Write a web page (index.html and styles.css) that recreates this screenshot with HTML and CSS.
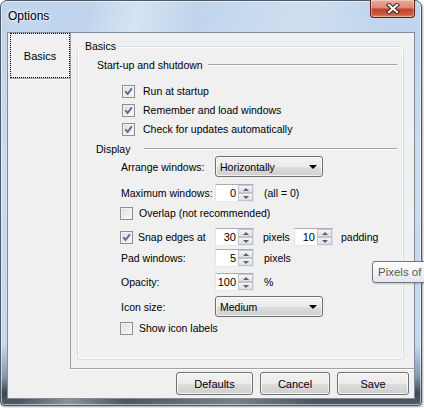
FILE: index.html
```html
<!DOCTYPE html>
<html>
<head>
<meta charset="utf-8">
<link rel="stylesheet" href="styles.css">
</head>
<body>
<div class="window">
  <div class="titlebar">
    <span class="title">Options</span>
    <div class="close">
      <svg width="14" height="11" viewBox="0 0 14 11">
        <path d="M3 2 L11 9 M11 2 L3 9" stroke="#3a2a28" stroke-width="4.2" stroke-linecap="square" fill="none"/>
        <path d="M3 2 L11 9 M11 2 L3 9" stroke="#ffffff" stroke-width="2.2" stroke-linecap="square" fill="none"/>
      </svg>
    </div>
  </div>
  <div class="client">
    <div class="main">
      <div class="tabs">
        <div class="tab">Basics</div>
        <div class="tab-line"></div>
      </div>
      <div class="panel">
        <div class="group">
          <span class="legend">Basics</span>

          <div class="header h1"><span>Start-up and shutdown</span><span class="rule"></span></div>

          <div class="row check startup first"><span class="cb"><svg width="11" height="11" viewBox="0 0 11 11"><path d="M2.3 5.2 L4.6 8 L8.8 2.4" stroke="#56699a" stroke-width="1.9" fill="none"/></svg></span><span>Run at startup</span></div>
          <div class="row check startup"><span class="cb"><svg width="11" height="11" viewBox="0 0 11 11"><path d="M2.3 5.2 L4.6 8 L8.8 2.4" stroke="#56699a" stroke-width="1.9" fill="none"/></svg></span><span>Remember and load windows</span></div>
          <div class="row check startup"><span class="cb"><svg width="11" height="11" viewBox="0 0 11 11"><path d="M2.3 5.2 L4.6 8 L8.8 2.4" stroke="#56699a" stroke-width="1.9" fill="none"/></svg></span><span>Check for updates automatically</span></div>

          <div class="header h2"><span>Display</span><span class="rule"></span></div>

          <div class="row field r-arrange">
            <span class="label">Arrange windows:</span>
            <div class="combo"><span>Horizontally</span><span class="arrow"></span></div>
          </div>

          <div class="row field r-max">
            <span class="label">Maximum windows:</span>
            <div class="spin"><span class="val">0</span><span class="btns"><span class="up"></span><span class="down"></span></span></div>
            <span class="unit">(all = 0)</span>
          </div>

          <div class="row check disp r-overlap"><span class="cb"></span><span>Overlap (not recommended)</span></div>

          <div class="row check r-snap">
            <span class="snap-label"><span class="cb"><svg width="11" height="11" viewBox="0 0 11 11"><path d="M2.3 5.2 L4.6 8 L8.8 2.4" stroke="#56699a" stroke-width="1.9" fill="none"/></svg></span><span>Snap edges at</span></span>
            <div class="spin"><span class="val">30</span><span class="btns"><span class="up"></span><span class="down"></span></span></div>
            <span class="unit wide">pixels</span>
            <div class="spin"><span class="val">10</span><span class="btns"><span class="up"></span><span class="down"></span></span></div>
            <span class="unit pad">padding</span>
          </div>

          <div class="row field r-pad">
            <span class="label">Pad windows:</span>
            <div class="spin"><span class="val">5</span><span class="btns"><span class="up"></span><span class="down"></span></span></div>
            <span class="unit">pixels</span>
          </div>

          <div class="row field r-opacity">
            <span class="label">Opacity:</span>
            <div class="spin"><span class="val">100</span><span class="btns"><span class="up"></span><span class="down"></span></span></div>
            <span class="unit">%</span>
          </div>

          <div class="row field r-icon">
            <span class="label">Icon size:</span>
            <div class="combo"><span>Medium</span><span class="arrow"></span></div>
          </div>

          <div class="row check disp r-show"><span class="cb"></span><span>Show icon labels</span></div>
        </div>
      </div>
    </div>
    <div class="footer">
      <div class="btn b-defaults">Defaults</div>
      <div class="btn b-cancel">Cancel</div>
      <div class="btn b-save">Save</div>
    </div>
  </div>
</div>
<div class="tooltip"><span>Pixels of</span></div>
</body>
</html>
```

FILE: styles.css
```css
html, body {
  margin: 0;
  padding: 0;
  overflow: hidden;
  background: #ffffff;
  width: 424px;
  height: 408px;
}
body {
  font-family: "Liberation Sans", Arial, sans-serif;
  font-size: 10.5px;
  color: #000;
  position: relative;
}
.window {
  box-sizing: border-box;
  width: 422px;
  height: 406px;
  border: 1px solid #4a5a6b;
  border-radius: 7px 7px 4px 4px;
  padding: 0 6px 6px 6px;
  display: flex;
  flex-direction: column;
  background:
    linear-gradient(100deg, rgba(255,255,255,0) 0%, rgba(255,255,255,0) 18%, rgba(255,255,255,.35) 28%, rgba(255,255,255,0) 40%, rgba(255,255,255,.25) 62%, rgba(255,255,255,0) 78%),
    linear-gradient(to bottom, #bed4ec 0%, #cadcf0 40%, #c4d8ee 85%, #8497ac 93%, #3d4854 97%, #525d69 100%);
  box-shadow: inset 0 0 0 1px rgba(255,255,255,.55), 1px 1px 2px rgba(0,0,0,.35);
}
.titlebar {
  height: 31px;
  display: flex;
  align-items: flex-start;
  justify-content: space-between;
}
.title {
  font-size: 12px;
  line-height: 14px;
  margin-top: 8px;
  margin-left: 1px;
  color: #000;
  text-shadow: 0 0 6px #fff, 0 0 3px #fff;
}
.close {
  width: 45px;
  height: 18px;
  margin-top: -1px;
  box-sizing: border-box;
  border: 1px solid #5a261c;
  border-top: none;
  border-radius: 0 0 4px 4px;
  background: linear-gradient(to bottom, #e9a99a 0%, #dc8a77 45%, #c4402a 55%, #cf5a3f 85%, #e08c6c 100%);
  box-shadow: inset 0 0 0 1px rgba(255,255,255,.35);
  display: flex;
  align-items: center;
  justify-content: center;
}
.client {
  flex: 1;
  border: 1px solid #7f8e9e;
  background: #f0f0f0;
  display: flex;
  flex-direction: column;
}
.main {
  height: 336px;
  display: flex;
}
.tabs {
  width: 62px;
  padding-left: 2px;
  box-sizing: border-box;
}
.tab {
  height: 45px;
  width: 60px;
  box-sizing: border-box;
  border: 1px dotted #000;
  display: flex;
  align-items: center;
  justify-content: center;
  font-size: 11px;
}
.tab-line {
  height: 1px;
  background: #a0a0a0;
  margin-right: -1px;
  box-shadow: 0 1px 0 #fff;
}
.panel {
  flex: 1;
  border-left: 1px solid #a0a0a0;
  border-bottom: 1px solid #a0a0a0;
  box-shadow: 0 1px 0 #fff;
  padding: 13px 10px 8px 6px;
  display: flex;
  flex-direction: column;
}
.group {
  flex: 1;
  position: relative;
  border: 1px solid #d5dfe5;
  border-radius: 3px;
  box-shadow: inset 0 0 0 1px #fff;
  padding: 0 6px 0 19px;
}
.legend {
  position: absolute;
  left: 6px;
  top: -8px;
  padding: 0 1px;
  line-height: 14px;
  background: #f0f0f0;
}
.header {
  height: 14px;
  display: flex;
  align-items: center;
  line-height: 14px;
  white-space: nowrap;
}
.header .rule {
  flex: 1;
  height: 0;
  border-top: 1px solid #a0a0a0;
  border-bottom: 1px solid #fff;
}
.h1 { margin-top: 11px; }
.h1 .rule { margin-left: 5px; }
.h2 { margin-top: 5px; margin-left: -1px; }
.h2 .rule { margin-left: 14px; }

.row {
  display: flex;
  align-items: center;
  white-space: nowrap;
}
.check { height: 16px; }
.check.startup { padding-left: 25px; margin-top: 3px; gap: 8px; }
.check.startup.first { margin-top: 11px; }
.check.disp { padding-left: 23px; gap: 6px; }

.cb {
  width: 13px;
  height: 13px;
  box-sizing: border-box;
  border: 1px solid #8e8f8f;
  background: linear-gradient(135deg, #dcdcdc 0%, #f2f2f2 70%, #fbfbfb 100%);
  box-shadow: inset 0 0 0 1px #f3f3f3;
  display: flex;
  flex: none;
}
.cb svg { display: block; }

.field { padding-left: 24px; }
.label { width: 94px; flex: none; }
.r-snap { padding-left: 23px; }
.snap-label { width: 95px; display: flex; align-items: center; gap: 5px; flex: none; }

.r-arrange { margin-top: 0; height: 21px; }
.r-max { margin-top: 7px; height: 18px; }
.r-overlap { margin-top: 3px; }
.r-snap { margin-top: 7px; height: 18px; }
.r-pad { margin-top: 3px; height: 18px; }
.r-opacity { margin-top: 6px; height: 18px; }
.r-icon { margin-top: 5px; height: 21px; }
.r-show { margin-top: 3px; }

.combo {
  width: 108px;
  height: 21px;
  box-sizing: border-box;
  border: 1px solid #707070;
  border-radius: 3px;
  background: linear-gradient(to bottom, #f2f2f2 0%, #ebebeb 50%, #dddddd 51%, #cfcfcf 100%);
  box-shadow: inset 0 0 0 1px rgba(255,255,255,.7);
  display: flex;
  align-items: center;
  justify-content: space-between;
  padding: 0 4px 0 4px;
  flex: none;
}
.combo .arrow {
  width: 0;
  height: 0;
  border-left: 4px solid transparent;
  border-right: 4px solid transparent;
  border-top: 4px solid #000;
  margin-right: 1px;
}
.spin {
  width: 39px;
  height: 18px;
  box-sizing: border-box;
  border: 1px solid #abadb3;
  border-right-color: #dbdfe6;
  border-bottom-color: #e3e9ef;
  border-left-color: #e2e3ea;
  background: #fff;
  display: flex;
  flex: none;
}
.spin .val {
  flex: 1;
  text-align: right;
  padding-right: 2px;
  line-height: 16px;
  font-size: 11px;
}
.spin .btns {
  width: 15px;
  display: flex;
  flex-direction: column;
}
.spin .up, .spin .down {
  flex: 1;
  box-sizing: border-box;
  border: 1px solid #c2c4c9;
  background: linear-gradient(to bottom, #f6f6f6, #dedede);
  display: flex;
  align-items: center;
  justify-content: center;
}
.spin .up::after {
  content: "";
  border-left: 3px solid transparent;
  border-right: 3px solid transparent;
  border-bottom: 3px solid #4d6185;
}
.spin .down::after {
  content: "";
  border-left: 3px solid transparent;
  border-right: 3px solid transparent;
  border-top: 3px solid #4d6185;
}
.unit { margin-left: 10px; }
.unit.wide { margin-left: 9px; width: 31px; flex: none; }
.unit.pad { margin-left: 8px; }

.footer {
  flex: 1;
  display: flex;
  justify-content: flex-end;
  align-items: flex-start;
  padding: 3px 5px 0 0;
}
.btn {
  height: 23px;
  box-sizing: border-box;
  border: 1px solid #707070;
  border-radius: 3px;
  background: linear-gradient(to bottom, #f2f2f2 0%, #ebebeb 50%, #dddddd 51%, #cfcfcf 100%);
  box-shadow: inset 0 0 0 1px rgba(255,255,255,.75);
  display: flex;
  align-items: center;
  justify-content: center;
  font-size: 11px;
}
.b-defaults { width: 77px; }
.b-cancel { width: 70px; margin-left: 7px; }
.b-save { width: 72px; margin-left: 7px; }

.tooltip {
  position: absolute;
  left: 372px;
  top: 261px;
  width: 70px;
  height: 22px;
  box-sizing: border-box;
  border: 1px solid #767676;
  border-radius: 3px;
  background: linear-gradient(to bottom, #ffffff, #e4e5f0);
  color: #575757;
  font-size: 11.5px;
  line-height: 20px;
  padding: 0 0 0 5px;
  white-space: nowrap;
  box-shadow: 1px 1px 2px rgba(0,0,0,.2);
}
```
